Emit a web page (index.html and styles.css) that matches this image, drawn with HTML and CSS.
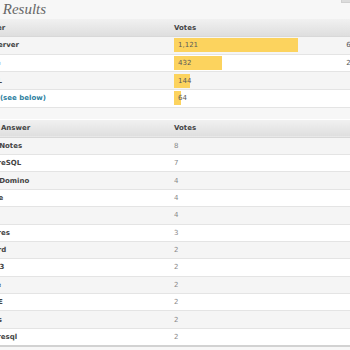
FILE: index.html
```html
<!DOCTYPE html>
<html>
<head>
<meta charset="utf-8">
<link rel="stylesheet" href="styles.css">
</head>
<body>
<div class="page">
  <div class="title-row">
    <h2 class="title">Poll Results</h2>
    <span class="tool-btn"></span>
  </div>
  <table class="grid results">
    <colgroup><col class="c-name"><col class="c-votes"><col class="c-pct"></colgroup>
    <thead>
      <tr><th>Answer</th><th>Votes</th><th></th></tr>
    </thead>
    <tbody>
      <tr><td class="name">SQL Server</td><td><span class="bar" style="width:124px">1,121</span></td><td class="pct">63.66%</td></tr>
      <tr><td class="name">Oracle</td><td><span class="bar" style="width:48px">432</span></td><td class="pct">24.53%</td></tr>
      <tr><td class="name">MySQL</td><td><span class="bar" style="width:16px">144</span></td><td class="pct">8.18%</td></tr>
      <tr><td class="name">Other <a class="link" href="#other">(see below)</a></td><td><span class="bar" style="width:7px">64</span></td><td class="pct">3.63%</td></tr>
    </tbody>
  </table>
  <table class="grid others" id="other">
    <colgroup><col class="c-name"><col class="c-votes2"></colgroup>
    <thead>
      <tr><th>Other Answer</th><th>Votes</th></tr>
    </thead>
    <tbody>
      <tr><td class="name">Lotus Notes</td><td class="num">8</td></tr>
      <tr><td class="name">PostgreSQL</td><td class="num">7</td></tr>
      <tr><td class="name">Lotus Domino</td><td class="num">4</td></tr>
      <tr><td class="name">Sybase</td><td class="num">4</td></tr>
      <tr><td class="name">DB2</td><td class="num">4</td></tr>
      <tr><td class="name">Postgres</td><td class="num">3</td></tr>
      <tr><td class="name">Firebird</td><td class="num">2</td></tr>
      <tr><td class="name">Works3</td><td class="num">2</td></tr>
      <tr><td class="name">SQLite</td><td class="num">2</td></tr>
      <tr><td class="name">SQL CE</td><td class="num">2</td></tr>
      <tr><td class="name">Access</td><td class="num">2</td></tr>
      <tr><td class="name">postgresql</td><td class="num">2</td></tr>
    </tbody>
  </table>
</div>
</body>
</html>
```

FILE: styles.css
```css
html, body {
  margin: 0;
  padding: 0;
}
body {
  background: #f7f7f7;
  font-family: "DejaVu Sans", Verdana, sans-serif;
  font-size: 7px;
  color: #555;
  width: 350px;
  height: 350px;
  overflow: hidden;
}
.page {
  margin-left: -29px;
  width: 406px;
}
.title-row {
  display: flex;
  justify-content: space-between;
  align-items: flex-start;
  height: 19px;
}
.title {
  margin: 1px 0 0;
  padding-left: 3px;
  font-family: "Liberation Serif", "Times New Roman", serif;
  font-style: italic;
  font-weight: normal;
  font-size: 15px;
  line-height: 16px;
  color: #666;
}
.tool-btn {
  display: block;
  width: 24px;
  height: 2px;
  margin-right: 10px;
  background: #dcdcdc;
  border: 1px solid #d0d0d0;
  border-top: 0;
}
.grid {
  width: 406px;
  border-collapse: collapse;
  table-layout: fixed;
}
.c-name { width: 198px; }
.c-votes { width: 173px; }
.c-pct { width: 35px; }
.grid th {
  height: 17px;
  padding: 0 5px;
  text-align: left;
  font-weight: bold;
  color: #444;
  background: linear-gradient(#f1f1f1, #dedede);
  border-bottom: 1px solid #d8d8d8;
}
.grid td {
  height: 16.7px;
  padding: 0 5px;
  border-bottom: 1px solid #e4e4e4;
  background: #fff;
  white-space: nowrap;
}
.grid tbody tr:nth-child(odd) td {
  background: #f5f5f5;
}
.grid td.name {
  font-weight: bold;
  color: #444;
  padding-left: 4px;
}
.grid td.num {
  color: #888;
}
.grid td.pct {
  text-align: right;
  color: #555;
  padding: 0 4px;
}
.bar {
  display: block;
  box-sizing: border-box;
  height: 14px;
  line-height: 14px;
  padding-left: 4px;
  background: #fcd35e;
  color: #5a5a5a;
  white-space: nowrap;
}
.link {
  color: #2e7f9f;
  text-decoration: none;
}
.results {
  margin-bottom: 11px;
}
.others th {
  height: 17px;
  border-top: 1px solid #fff;
}
.others td {
  height: 16.36px;
}
.others {
  border-bottom: 2px solid #d2d2d2;
}
```
